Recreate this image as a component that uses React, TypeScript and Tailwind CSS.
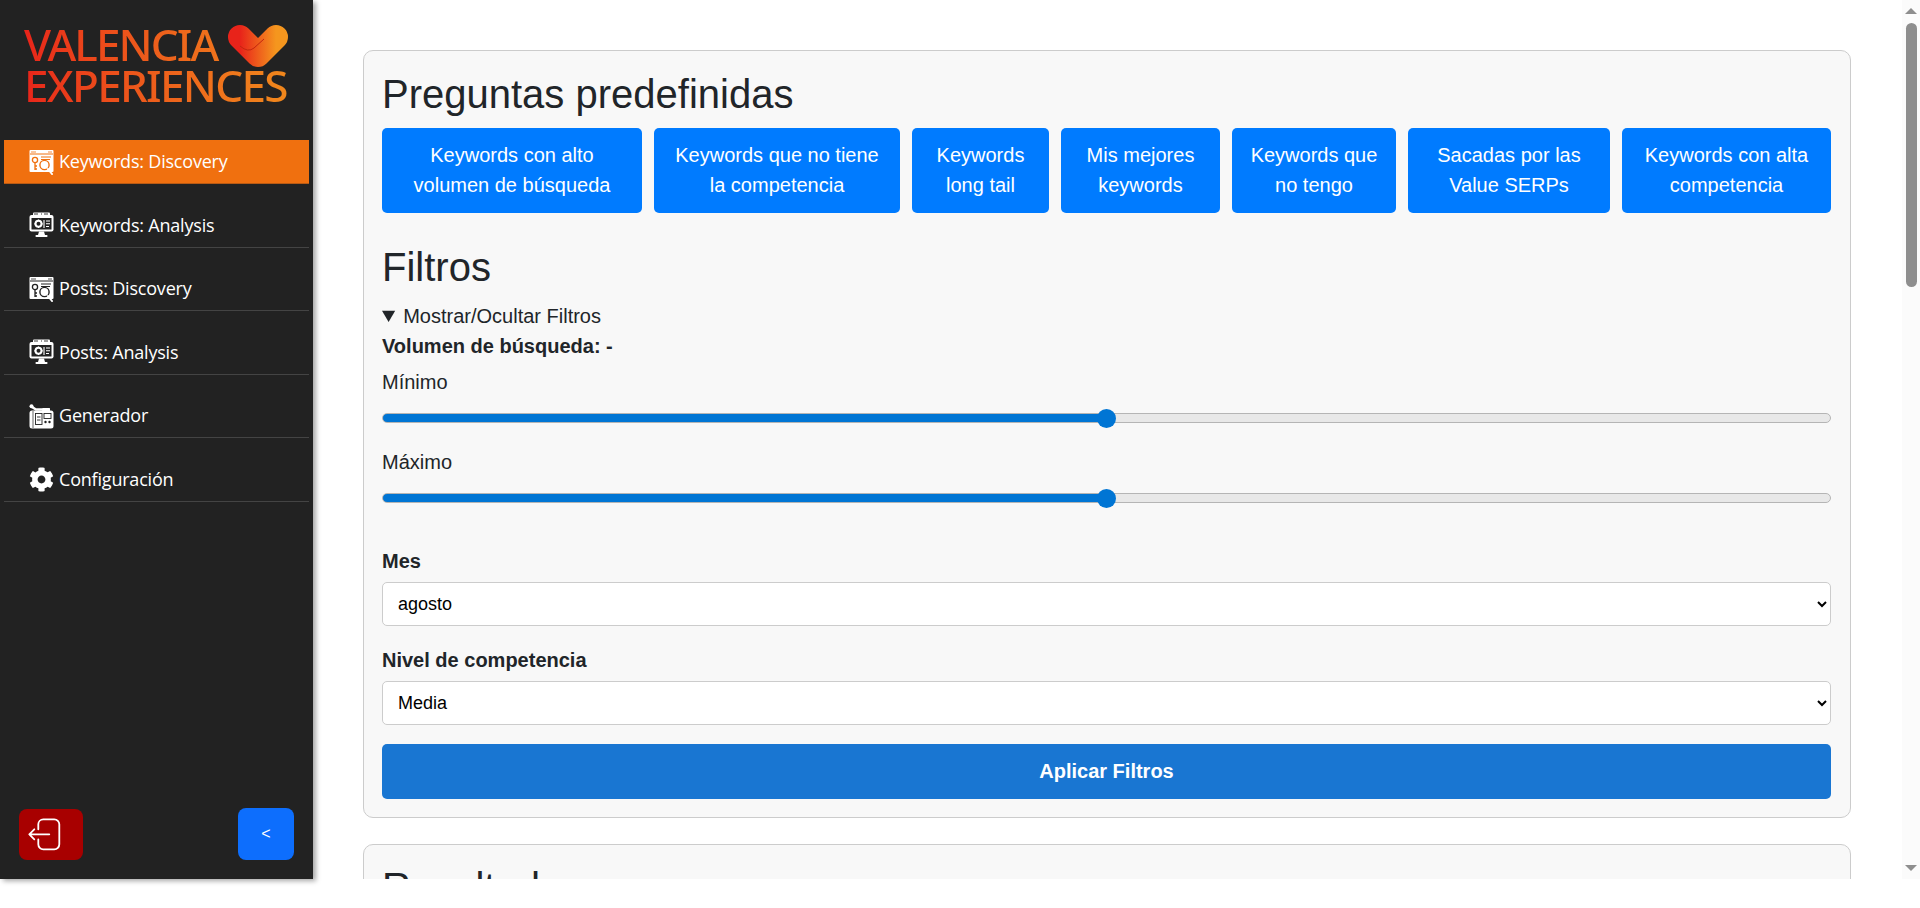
import { FaCog } from "react-icons/fa";

const preguntas = [
  { w: "w-[260px]", a: "Keywords con alto", b: "volumen de búsqueda" },
  { w: "w-[246px]", a: "Keywords que no tiene", b: "la competencia" },
  { w: "w-[137px]", a: "Keywords", b: "long tail" },
  { w: "w-[159px]", a: "Mis mejores", b: "keywords" },
  { w: "w-[164px]", a: "Keywords que", b: "no tengo" },
  { w: "w-[202px]", a: "Sacadas por las", b: "Value SERPs" },
  { w: "w-[209px]", a: "Keywords con alta", b: "competencia" },
];

function WindowSearchIcon({ bg }: { bg: string }) {
  return (
    <svg width="25" height="26" viewBox="0 0 25 26" className="shrink-0">
      <rect x="0.5" y="1" width="24" height="22" rx="1" fill="#fff" />
      <path d="M1 5h23" stroke={bg} strokeWidth="1" />
      <path d="M2 3h5M19 3h4" stroke={bg} strokeWidth="0.8" />
      <circle cx="6" cy="11" r="2.6" fill="none" stroke={bg} strokeWidth="1.3" />
      <path d="M6 14v7M6 17h2M6 20h2" stroke={bg} strokeWidth="1.3" />
      <path d="M12 8h10M12 10.5h9" stroke={bg} strokeWidth="1.1" />
      <circle cx="15.5" cy="16" r="4.6" fill="#fff" stroke={bg} strokeWidth="1.4" />
      <path d="M19 20l4 5" stroke="#fff" strokeWidth="2" strokeLinecap="round" />
    </svg>
  );
}

function MonitorIcon({ bg }: { bg: string }) {
  return (
    <svg width="25" height="26" viewBox="0 0 25 26" className="shrink-0">
      <rect x="0.5" y="3" width="24" height="16.5" rx="2" fill="#fff" />
      <rect x="4" y="0.5" width="17" height="5" rx="1" fill="#fff" />
      <path d="M5 2h4M12 2h1M15 2h4" stroke={bg} strokeWidth="0.9" />
      <rect x="2.5" y="6" width="20" height="11.5" fill={bg} />
      <circle cx="9.5" cy="11.8" r="3" fill="none" stroke="#fff" strokeWidth="2" />
      <path d="M9.5 7.6v1.2M9.5 14.8v1.2M5.3 11.8h1.2M12.5 11.8h1.2" stroke="#fff" strokeWidth="1.2" />
      <path d="M15 8v8M17 9h4M17 11.8h4M17 14.5h3" stroke="#fff" strokeWidth="1.1" />
      <path d="M10 19.5h5l1 3.5H9z" fill="#fff" />
      <rect x="6.5" y="23" width="12" height="2" rx="0.8" fill="#fff" />
    </svg>
  );
}

function GeneradorIcon({ bg }: { bg: string }) {
  return (
    <svg width="25" height="26" viewBox="0 0 25 26" className="shrink-0">
      <circle cx="2.5" cy="3.2" r="2" fill="#fff" />
      <path d="M3 4l4 2.5h6" stroke="#fff" strokeWidth="2.4" fill="none" />
      <rect x="13" y="5" width="8" height="3" rx="0.5" fill="#fff" />
      <rect x="0.5" y="7.5" width="24" height="18" rx="2.5" fill="#fff" />
      <rect x="6.5" y="10.5" width="6.5" height="11" fill="none" stroke={bg} strokeWidth="0.9" />
      <path d="M8 14h3.5M8 17h3.5" stroke={bg} strokeWidth="0.9" />
      <rect x="15" y="10.5" width="7" height="5" fill="none" stroke={bg} strokeWidth="0.9" />
      <circle cx="16.5" cy="19" r="1.2" fill={bg} />
      <circle cx="20.5" cy="19" r="1.2" fill={bg} />
      <path d="M4 8v17" stroke={bg} strokeWidth="0.7" />
    </svg>
  );
}

function NavItem({ icon, label, active }: { icon: React.ReactNode; label: string; active?: boolean }) {
  return (
    <a
      className={
        active
          ? "flex h-[44px] mb-[19.5px] items-center gap-[5px] pl-[25px] bg-[#f0700f] border-b border-[#b85a14] text-white"
          : "flex h-[44px] mb-[19.5px] items-center gap-[5px] pl-[25px] border-b border-[#444444] text-white"
      }
    >
      {icon}
      <span className="font-['Open_Sans',sans-serif] text-[18px] tracking-[-0.2px]">{label}</span>
    </a>
  );
}

function Logo() {
  return (
    <div className="relative h-[140px] pt-[24px] pl-[24px] font-['Noto_Sans',sans-serif]">
      <div className="w-[266px] bg-gradient-to-r from-[#e8231a] to-[#f0881c] bg-clip-text text-transparent text-[44px] leading-[41px] font-medium">
        <div className="tracking-[-1.9px]">VALENCIA</div>
        <div className="tracking-[-1.7px]">EXPERIENCES</div>
      </div>
      <svg width="64" height="46" viewBox="0 0 64 46" className="absolute left-[226px] top-[24px]">
        <defs>
          <linearGradient id="corazon" x1="0" y1="0" x2="1" y2="0">
            <stop offset="0" stopColor="#e8231a" />
            <stop offset="1" stopColor="#f5961e" />
          </linearGradient>
        </defs>
        <path d="M14 13L32 31L50 13" fill="none" stroke="url(#corazon)" strokeWidth="24" strokeLinecap="round" strokeLinejoin="round" />
        <path d="M14 22Q22 29 28 24L38 15" fill="none" stroke="#c2260f" strokeWidth="1" />
      </svg>
    </div>
  );
}

function Sidebar() {
  return (
    <aside className="relative z-10 flex w-[313px] shrink-0 flex-col bg-[#222222] shadow-[3px_2px_5px_rgba(0,0,0,0.35)]">
      <Logo />
      <nav className="px-[4px]">
        <NavItem active label="Keywords: Discovery" icon={<WindowSearchIcon bg="#f0700f" />} />
        <NavItem label="Keywords: Analysis" icon={<MonitorIcon bg="#222222" />} />
        <NavItem label="Posts: Discovery" icon={<WindowSearchIcon bg="#222222" />} />
        <NavItem label="Posts: Analysis" icon={<MonitorIcon bg="#222222" />} />
        <NavItem label="Generador" icon={<GeneradorIcon bg="#222222" />} />
        <NavItem label="Configuración" icon={<FaCog className="h-[25px] w-[25px] shrink-0" />} />
      </nav>
      <div className="mt-auto flex items-end justify-between pl-[19px] pr-[19px] pb-[19px]">
        <button className="h-[51px] w-[64px] rounded-lg bg-[#a80000]">
          <svg width="64" height="51" viewBox="0 0 64 51" fill="none" stroke="#fff" strokeWidth="1.8" strokeLinecap="round" strokeLinejoin="round">
            <path d="M10.3 25.3H30.3M15.3 20.3L10.3 25.3L15.3 30.3" />
            <path d="M19.3 20.3V15.3a5 5 0 0 1 5-5H35.3a5 5 0 0 1 5 5V35.3a5 5 0 0 1-5 5H24.3a5 5 0 0 1-5-5V30.3" />
          </svg>
        </button>
        <button className="h-[52px] w-[56px] rounded-lg bg-[#0d6efd] text-white text-base font-['Liberation_Sans',sans-serif]">&lt;</button>
      </div>
    </aside>
  );
}

function Slider() {
  return (
    <input
      type="range"
      defaultValue={50}
      className="mt-[14px] block h-[18px] w-full cursor-pointer appearance-none bg-transparent [&::-webkit-slider-runnable-track]:h-[10px] [&::-webkit-slider-runnable-track]:rounded-full [&::-webkit-slider-runnable-track]:border [&::-webkit-slider-runnable-track]:border-[#b5b5b5] [&::-webkit-slider-runnable-track]:bg-[linear-gradient(to_right,#0075d4_50%,#e8e8e8_50%)] [&::-webkit-slider-thumb]:-mt-[5.5px] [&::-webkit-slider-thumb]:h-[19px] [&::-webkit-slider-thumb]:w-[19px] [&::-webkit-slider-thumb]:appearance-none [&::-webkit-slider-thumb]:rounded-full [&::-webkit-slider-thumb]:bg-[#0075d4]"
    />
  );
}

function Scrollbar() {
  return (
    <div className="flex w-[18px] shrink-0 flex-col items-center bg-[#fbfbfb]">
      <div className="mt-[8px] h-0 w-0 border-x-[6px] border-b-[6px] border-x-transparent border-b-[#8e8e8e]" />
      <div className="mt-[9px] h-[264px] w-[11px] rounded-full bg-[#8e8e8e]" />
      <div className="mt-auto mb-[8px] h-0 w-0 border-x-[6px] border-t-[6px] border-x-transparent border-t-[#8e8e8e]" />
    </div>
  );
}

export default function App() {
  return (
    <div className="h-[908px] w-full overflow-hidden bg-white">
      <div className="flex h-[879px] text-[#212529] font-['Liberation_Sans',sans-serif]">
        <Sidebar />
        <main className="min-w-0 flex-1 overflow-hidden pl-[50px] pr-[51px] pt-[50px]">
          <section className="rounded-[10px] border border-[#cccccc] bg-[#f8f8f8] pl-[18px] pr-[19px] pt-[19px] pb-[18px]">
            <h2 className="text-[40px] leading-[48px] mb-[10px]">Preguntas predefinidas</h2>
            <div className="flex gap-3">
              {preguntas.map((p) => (
                <button key={p.a} className={`${p.w} h-[85px] rounded-[5px] bg-[#007bff] pb-[2px] text-[20px] leading-[30px] text-white`}>
                  {p.a}
                  <br />
                  {p.b}
                </button>
              ))}
            </div>
            <h2 className="mt-[30px] text-[40px] leading-[48px]">Filtros</h2>
            <details open className="mt-[12px]">
              <summary className="h-[26px] cursor-pointer text-[20px] leading-[26px]">Mostrar/Ocultar Filtros</summary>
              <div className="mt-[4px] text-[20px] leading-[26px] font-bold">Volumen de búsqueda: -</div>
              <div className="mt-[10px] text-[20px] leading-[26px]">Mínimo</div>
              <Slider />
              <div className="mt-[22px] text-[20px] leading-[26px]">Máximo</div>
              <Slider />
              <div className="mt-[41px] text-[20px] leading-[26px] font-bold">Mes</div>
              <select defaultValue="agosto" className="mt-[8px] block h-[44px] w-full rounded-[5px] border border-[#cccccc] bg-white px-[11px] text-[18px] text-black">
                <option>agosto</option>
              </select>
              <div className="mt-[21px] text-[20px] leading-[26px] font-bold">Nivel de competencia</div>
              <select defaultValue="Media" className="mt-[8px] block h-[44px] w-full rounded-[5px] border border-[#cccccc] bg-white px-[11px] text-[18px] text-black">
                <option>Media</option>
              </select>
            </details>
            <button className="mt-[19px] block h-[55px] w-full rounded-[5px] bg-[#1976d2] pb-[2px] text-[20px] font-bold text-white">
              Aplicar Filtros
            </button>
          </section>
          <section className="mt-[26px] rounded-[10px] border border-[#cccccc] bg-[#f8f8f8] pl-[18px] pr-[19px] pt-[18px] pb-[18px]">
            <h2 className="text-[40px] leading-[48px]">Resultados</h2>
          </section>
        </main>
        <Scrollbar />
      </div>
    </div>
  );
}
